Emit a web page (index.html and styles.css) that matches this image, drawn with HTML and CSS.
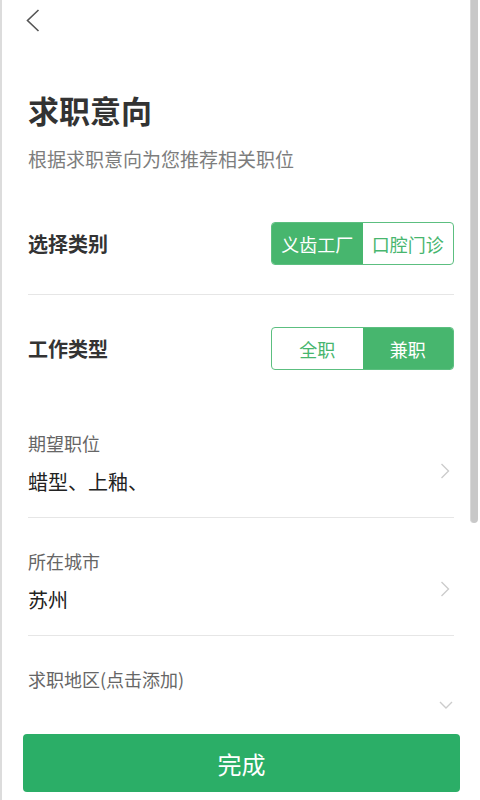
FILE: index.html
```html
<!DOCTYPE html>
<html lang="zh-CN">
<head>
    <meta charset="UTF-8">
    <meta name="viewport" content="width=device-width, initial-scale=1.0">
    <title>求职意向</title>
    <link rel="stylesheet" href="styles.css">
</head>
<body>
    <div class="page">
        <div class="main">
            <div class="scroll">
                <header class="top-bar">
                    <a class="back" href="#">
                        <svg width="14" height="24" viewBox="0 0 14 24"><polyline points="12.5,1 1.5,11.5 12.5,22" fill="none" stroke="#555" stroke-width="1.6"/></svg>
                    </a>
                </header>

                <h1 class="title">求职意向</h1>
                <p class="subtitle">根据求职意向为您推荐相关职位</p>

                <div class="choice-row first">
                    <span class="choice-label">选择类别</span>
                    <div class="toggle">
                        <span class="toggle-item active">义齿工厂</span>
                        <span class="toggle-item">口腔门诊</span>
                    </div>
                </div>

                <div class="choice-row second">
                    <span class="choice-label">工作类型</span>
                    <div class="toggle">
                        <span class="toggle-item">全职</span>
                        <span class="toggle-item active">兼职</span>
                    </div>
                </div>

                <div class="field">
                    <div class="field-text">
                        <div class="field-label">期望职位</div>
                        <div class="field-value">蜡型、上釉、</div>
                    </div>
                    <svg class="arrow" width="10" height="16" viewBox="0 0 10 16"><polyline points="1.5,1 8.5,8 1.5,15" fill="none" stroke="#ccc" stroke-width="1.4"/></svg>
                </div>

                <div class="field">
                    <div class="field-text">
                        <div class="field-label">所在城市</div>
                        <div class="field-value">苏州</div>
                    </div>
                    <svg class="arrow" width="10" height="16" viewBox="0 0 10 16"><polyline points="1.5,1 8.5,8 1.5,15" fill="none" stroke="#ccc" stroke-width="1.4"/></svg>
                </div>

                <div class="field last">
                    <div class="field-text">
                        <div class="field-label">求职地区(点击添加)</div>
                        <div class="field-value">&nbsp;</div>
                    </div>
                    <svg class="arrow-down" width="14" height="10" viewBox="0 0 14 10"><polyline points="1,2 7,8 13,2" fill="none" stroke="#ccc" stroke-width="1.4"/></svg>
                </div>
            </div>
            <div class="scrollbar">
                <div class="scrollbar-thumb"></div>
            </div>
        </div>

        <footer class="bottom">
            <button type="button" class="done">完成</button>
        </footer>
    </div>
</body>
</html>
```

FILE: styles.css
```css
body {
    margin: 0;
    font-family: "Noto Sans CJK SC", "Noto Sans", sans-serif;
    background-color: white;
}

.page {
    height: 100vh;
    display: flex;
    flex-direction: column;
    border-left: 2px solid #dcdcdc;
    box-sizing: border-box;
}

.main {
    flex: 1;
    min-height: 0;
    display: flex;
}

.scroll {
    flex: 1;
    overflow: hidden;
    padding: 0 16px 0 26px;
}

.scrollbar {
    width: 10px;
    padding-right: 2px;
    box-sizing: border-box;
}

.scrollbar-thumb {
    height: 523px;
    background-color: #c8c8c8;
    border-left: 1px solid #d8d8d8;
    border-radius: 0 0 4px 4px;
}

.top-bar {
    height: 42px;
    display: flex;
    align-items: center;
}

.back {
    display: flex;
    margin-left: -2px;
}

.title {
    margin: 48px 0 0;
    font-size: 31px;
    line-height: 40px;
    font-weight: bold;
    color: #333;
}

.subtitle {
    margin: 16px 0 0;
    font-size: 19px;
    line-height: 26px;
    color: #7d7d7d;
}

.choice-row {
    display: flex;
    justify-content: space-between;
    align-items: center;
}

.choice-row.first {
    margin-top: 22px;
    padding: 28px 0 29px;
    border-bottom: 1px solid #e6e6e6;
}

.choice-row.second {
    padding: 32px 0 30px;
}

.choice-label {
    font-size: 20px;
    font-weight: bold;
    color: #333;
}

.toggle {
    display: flex;
    width: 183px;
    height: 43px;
    border: 1px solid #5cbf80;
    border-radius: 4px;
    box-sizing: border-box;
    overflow: hidden;
}

.toggle-item {
    flex: 1;
    display: flex;
    justify-content: center;
    align-items: center;
    font-size: 18px;
    color: #47b66e;
}

.toggle-item.active {
    background-color: #47b66e;
    color: white;
}

.field {
    display: flex;
    justify-content: space-between;
    align-items: flex-end;
    padding: 31px 4px 21px 0;
    border-bottom: 1px solid #e6e6e6;
}

.field.last {
    border-bottom: none;
}

.field-label {
    font-size: 18px;
    line-height: 24px;
    color: #666;
}

.field-value {
    margin-top: 13px;
    font-size: 20px;
    line-height: 28px;
    color: #222;
}

.arrow {
    margin-bottom: 17px;
}

.arrow-down {
    margin: 0 -3px 22px 0;
}

.bottom {
    padding: 22px 18px 8px 21px;
    background-color: white;
}

.done {
    width: 437px;
    height: 58px;
    display: block;
    background-color: #2bae67;
    color: white;
    border: none;
    border-radius: 4px;
    font-family: inherit;
    font-size: 24px;
    cursor: pointer;
}

.done:hover {
    background-color: #27a05e;
}
```
